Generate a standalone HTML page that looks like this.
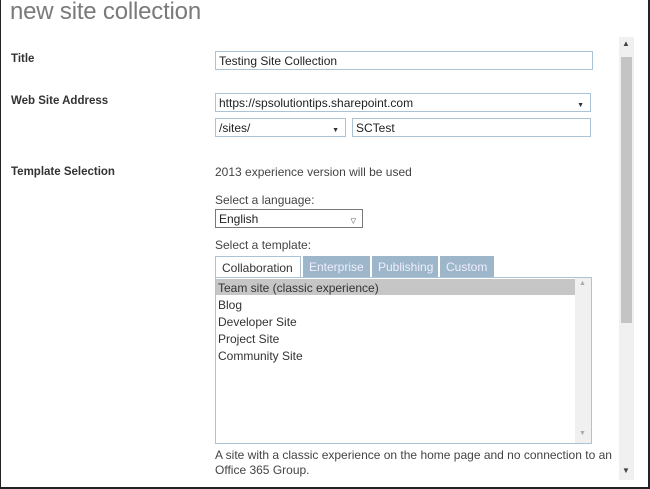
<!DOCTYPE html>
<html><head><style>
*{margin:0;padding:0;box-sizing:border-box}
body{width:650px;height:489px;overflow:hidden;background:#fff;font-family:"Liberation Sans",sans-serif;font-size:12px;color:#444;position:relative}
.frame{position:absolute;left:0;top:-2px;width:650px;height:491px;border:1px solid #222;border-top:none;border-width:0 2px 2px 1px}
.a{position:absolute;white-space:nowrap}
h1{position:absolute;left:10px;top:-2px;font-weight:normal;font-size:24px;color:#7a7a7a;font-family:"Liberation Sans",sans-serif;letter-spacing:-0.2px}
.lab{font-weight:bold;font-size:11.5px;color:#333}
.box{position:absolute;border:1px solid #abc3d6;background:#fff;font-size:12px;color:#222;padding:2px 0 0 3px;line-height:15px}
.arr{position:absolute;right:6px;top:4px;font-size:7px;color:#333}
.t{font-size:12px;color:#444}
.tab{position:absolute;top:256px;height:21px;background:#9db6c9;color:#eef;font-size:12px;padding:4px 0 0 6px}
.item{position:absolute;left:218px;font-size:12px;color:#333}
</style></head><body>
<div class="frame"></div>
<h1>new site collection</h1>
<div class="a lab" style="left:11px;top:53px">Title</div>
<div class="a lab" style="left:11px;top:95px">Web Site Address</div>
<div class="a lab" style="left:11px;top:166px">Template Selection</div>
<div class="box" style="left:215px;top:51px;width:378px;height:19px">Testing Site Collection</div>
<div class="box" style="left:215px;top:93px;width:376px;height:19px">https://spsolutiontips.sharepoint.com<span class="arr">▼</span></div>
<div class="box" style="left:215px;top:118px;width:131px;height:19px">/sites/<span class="arr">▼</span></div>
<div class="box" style="left:352px;top:118px;width:239px;height:19px">SCTest</div>
<div class="a t" style="left:215px;top:165px">2013 experience version will be used</div>
<div class="a t" style="left:215px;top:193px">Select a language:</div>
<div class="box" style="left:215px;top:209px;width:148px;height:19px;border-color:#777">English<span class="arr">▽</span></div>
<div class="a t" style="left:215px;top:238px">Select a template:</div>
<div class="tab" style="left:215px;width:86px;background:#fff;color:#333;border:1px solid #abc3d6;border-bottom:none;height:22px">Collaboration</div>
<div class="tab" style="left:303px;width:67px">Enterprise</div>
<div class="tab" style="left:372px;width:66px">Publishing</div>
<div class="tab" style="left:440px;width:54px">Custom</div>
<div class="a" style="left:215px;top:277px;width:377px;height:167px;border:1px solid #abc3d6"></div>
<div class="a" style="left:216px;top:279px;width:359px;height:16px;background:#c6c6c6"></div>
<div class="a" style="left:575px;top:278px;width:16px;height:165px;background:#f0f0f0"></div>
<div class="a" style="left:579px;top:280px;font-size:7px;color:#aaa">▲</div>
<div class="a" style="left:579px;top:430px;font-size:7px;color:#aaa">▼</div>
<div class="item" style="top:281px">Team site (classic experience)</div>
<div class="item" style="top:298px">Blog</div>
<div class="item" style="top:315px">Developer Site</div>
<div class="item" style="top:332px">Project Site</div>
<div class="item" style="top:349px">Community Site</div>
<div class="a t" style="left:215px;top:448px;line-height:15px">A site with a classic experience on the home page and no connection to an<br>Office 365 Group.</div>
<div class="a" style="left:619px;top:37px;width:15px;height:443px;background:#f0f0f0"></div>
<div class="a" style="left:621px;top:57px;width:11px;height:266px;background:#c4c4c4"></div>
<div class="a" style="left:622px;top:39px;font-size:8px;color:#444">▲</div>
<div class="a" style="left:622px;top:466px;font-size:8px;color:#444">▼</div>
</body></html>
